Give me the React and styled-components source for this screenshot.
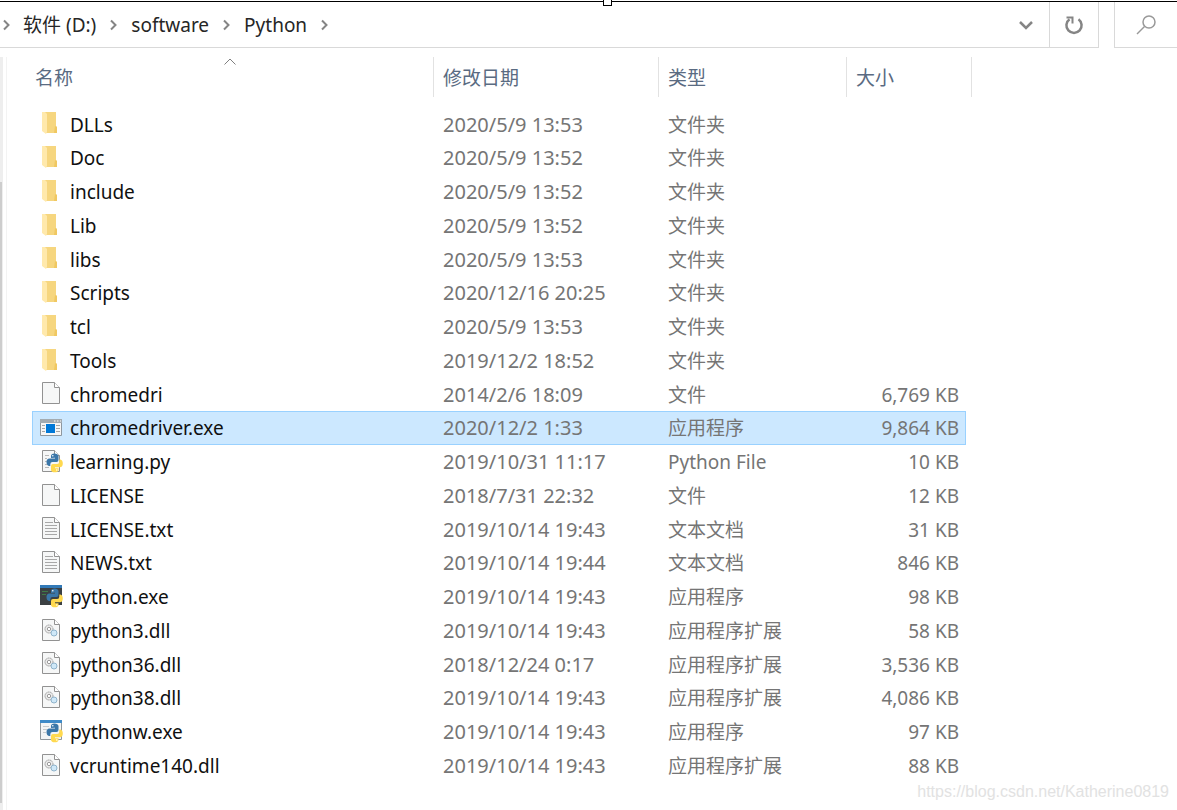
import React from "react";
import styled, { createGlobalStyle, css } from "styled-components";

const GlobalStyle = createGlobalStyle`
  * {
    box-sizing: border-box;
  }
  body {
    margin: 0;
    background: #ffffff;
    font-family: "Noto Sans", "Noto Sans CJK SC", sans-serif;
    font-size: 19px;
    color: #262626;
  }
  button {
    border: 0;
    padding: 0;
    background: none;
    font: inherit;
    color: inherit;
  }
`;

const Window = styled.div`
  position: relative;
  min-height: 100vh;
  display: flex;
  flex-direction: column;
`;

const TopEdge = styled.div`
  height: 2px;
  border-bottom: 1px solid #000000;
`;

const ResizeHandle = styled.span`
  position: absolute;
  top: 0;
  left: calc(50% + 14px);
  width: 9px;
  height: 6px;
  border: 1px solid #000000;
  border-top: 0;
  background: #ffffff;
`;

const Toolbar = styled.header`
  display: flex;
  height: 46px;
`;

const AddressBar = styled.nav`
  flex: 1;
  display: flex;
  align-items: center;
  border-bottom: 1px solid #d9d9d9;
`;

const Crumb = styled.button`
  line-height: 28px;
  white-space: nowrap;
`;

const CrumbArrow = styled.svg`
  width: 9px;
  height: 12px;
  margin: 0 ${({ $first }) => ($first ? "12px 0 2px" : "13px")};
  fill: none;
  stroke: #858585;
  stroke-width: 2;
`;

const ToolButton = styled.button`
  display: flex;
  align-items: center;
  justify-content: center;
  width: ${({ $width }) => $width};
  height: 46px;
  border: solid #d9d9d9;
  border-width: ${({ $edges }) => $edges};
`;

const HistoryButton = styled.button`
  display: flex;
  margin-left: auto;
  margin-right: 15px;
`;

const SearchButton = styled(ToolButton)`
  margin-left: 15px;
`;

const Body = styled.main`
  flex: 1;
  display: flex;
  padding-top: 9px;
`;

const ScrollTrack = styled.div`
  width: 7px;
  border-right: 1px solid #f3f3f3;
  background: linear-gradient(to right, #eeeeee 3px, #ffffff 3px);
`;

const ScrollThumb = styled.div`
  width: 2px;
  height: calc(100% - 132px);
  margin-top: 125px;
  background: #cdcdcd;
`;

const FileTable = styled.table`
  margin-left: 25px;
  table-layout: fixed;
  width: 940px;
  border-spacing: 0;
  align-self: flex-start;
`;

const HeadCell = styled.th`
  position: relative;
  height: 40px;
  padding: 0 0 0 ${({ $indent }) => $indent || "9px"};
  border-right: 1px solid #e2e2e2;
  text-align: left;
  font-weight: 400;
  color: #5a6b82;
`;

const SortMark = styled.svg`
  position: absolute;
  top: 0;
  left: 191px;
  width: 14px;
  height: 9px;
  fill: none;
  stroke: #7f7f7f;
`;

const Spacer = styled.tr`
  height: 11px;
`;

const Row = styled.tr`
  height: 34px;
  &:nth-child(4n + 1) {
    height: 33px;
  }
  ${({ $selected }) =>
    $selected &&
    css`
      td {
        background: #cce8ff;
        border-color: #99d1ff;
      }
    `}
`;

const Cell = styled.td`
  padding: 0 0 0 9px;
  border: 0 solid transparent;
  border-width: 1px 0;
  line-height: 28px;
  font-size: ${({ $size }) => $size || "19px"};
  color: #757575;
  white-space: nowrap;
`;

const NameCell = styled(Cell)`
  padding-left: 6px;
  border-left-width: 1px;
  color: #101010;
`;

const SizeCell = styled(Cell)`
  padding: 0 6px 0 0;
  border-right-width: 1px;
  text-align: right;
`;

const FileName = styled.div`
  display: flex;
  align-items: center;
  gap: 7px;
`;

const FileIcon = styled.svg`
  flex: none;
  width: 24px;
  height: 24px;
  margin-bottom: 3px;
`;

const Watermark = styled.span`
  position: absolute;
  right: 8px;
  bottom: 9px;
  font: 16px/18px "Liberation Sans", sans-serif;
  color: #e2e2e2;
`;

const Sheet = ({ children }) => (
  <>
    <path d="M3.5 1.5h12l5 5v16h-17z" fill="#f6f7f7" stroke="#929292" />
    <path d="M15.5 1.5v5h5" fill="#ffffff" stroke="#929292" />
    {children}
  </>
);

const PythonMark = () => (
  <>
    <path
      d="M12 9v-2q0-2.500 3.500-2.500t4 2.500v4q0 2-2 2h-4q-2.200 0-2.200 2.300v1.700h-1.300q-2.500-.5-2.500-4t3-3.500h5.500v-.8z"
      fill="#3a76a8"
    />
    <path
      d="M20.300 10.500h1q2.500.5 2.500 4t-3 3.800h-4.800v.9h3.500v1.800q-.3 2.300-3.700 2.300t-3.800-2.300v-4q0-2 2-2h4.100q2.200 0 2.200-2.300z"
      fill="#ffd94f"
    />
    <circle cx="13.800" cy="6.800" r=".8" fill="#ffffff" />
    <circle cx="17.800" cy="21" r=".8" fill="#ffffff" />
  </>
);

const icons = {
  folder: (
    <>
      <path d="M6 1h11v14l1 1v6h-12z" fill="#f6d67f" />
      <path d="M16 15l2 1v6h-3z" fill="#f0c862" />
      <path d="M3 1h3l2 2v18l-1 2-4-3z" fill="#ffe9ac" />
    </>
  ),
  file: <Sheet />,
  text: (
    <Sheet>
      <path
        d="M6 6.500h8M6 9.500h12M6 12.500h12M6 15.500h12M6 18.500h12"
        stroke="#a8a8a8"
      />
    </Sheet>
  ),
  python: (
    <Sheet>
      <path
        d="M6 6.500h4M6 9.500h2M6 12.500h2M6 15.500h2M6 18.500h4"
        stroke="#b8b8b8"
      />
      <PythonMark />
    </Sheet>
  ),
  dll: (
    <Sheet>
      <circle
        cx="10"
        cy="11"
        r="4"
        fill="#ececec"
        stroke="#9a9a9a"
        strokeDasharray="1.500 .6"
      />
      <circle cx="10" cy="11" r="1.700" fill="#ffffff" stroke="#9a9a9a" />
      <circle cx="15" cy="15" r="3" fill="#cfe8f8" stroke="#8fb3cb" />
    </Sheet>
  ),
  app: (
    <>
      <path d="M1.500 4.500h21v16h-21z" fill="#f6f6f6" stroke="#8e979e" />
      <path d="M1 4h22v4h-22z" fill="#a3abb1" />
      <path d="M15 6h1.500M18 6h1.500M21 6h1" stroke="#ffffff" />
      <path
        d="M3 10.500h3M3 13.500h3M3 16.500h3M17 10.500h4M17 13.500h4M17 16.500h4"
        stroke="#a6a6a6"
      />
      <path d="M7 9h9v9h-9z" fill="#0078d7" />
    </>
  ),
  console: (
    <>
      <path d="M1 2h22v19h-22z" fill="#3b4043" />
      <path d="M1 1h22v3h-22z" fill="#3279b7" />
      <path d="M3 7.500h6M3 10.500h4" stroke="#3f7a48" />
      <PythonMark />
    </>
  ),
  windowed: (
    <>
      <path d="M1.500 2.500h21v18h-21z" fill="#f3f5f6" stroke="#8f979d" />
      <path d="M1 1h22v3h-22z" fill="#3e8ac8" />
      <path d="M4 7.500h6M4 10.500h4M4 13.500h3" stroke="#c6cacd" />
      <PythonMark />
    </>
  ),
};

const files = [
  ["folder", "DLLs", "2020/5/9 13:53", "文件夹"],
  ["folder", "Doc", "2020/5/9 13:52", "文件夹"],
  ["folder", "include", "2020/5/9 13:52", "文件夹"],
  ["folder", "Lib", "2020/5/9 13:52", "文件夹"],
  ["folder", "libs", "2020/5/9 13:53", "文件夹"],
  ["folder", "Scripts", "2020/12/16 20:25", "文件夹"],
  ["folder", "tcl", "2020/5/9 13:53", "文件夹"],
  ["folder", "Tools", "2019/12/2 18:52", "文件夹"],
  ["file", "chromedri", "2014/2/6 18:09", "文件", "6,769 KB"],
  ["app", "chromedriver.exe", "2020/12/2 1:33", "应用程序", "9,864 KB"],
  ["python", "learning.py", "2019/10/31 11:17", "Python File", "10 KB"],
  ["file", "LICENSE", "2018/7/31 22:32", "文件", "12 KB"],
  ["text", "LICENSE.txt", "2019/10/14 19:43", "文本文档", "31 KB"],
  ["text", "NEWS.txt", "2019/10/14 19:44", "文本文档", "846 KB"],
  ["console", "python.exe", "2019/10/14 19:43", "应用程序", "98 KB"],
  ["dll", "python3.dll", "2019/10/14 19:43", "应用程序扩展", "58 KB"],
  ["dll", "python36.dll", "2018/12/24 0:17", "应用程序扩展", "3,536 KB"],
  ["dll", "python38.dll", "2019/10/14 19:43", "应用程序扩展", "4,086 KB"],
  ["windowed", "pythonw.exe", "2019/10/14 19:43", "应用程序", "97 KB"],
  ["dll", "vcruntime140.dll", "2019/10/14 19:43", "应用程序扩展", "88 KB"],
];

const Arrow = ({ first }) => (
  <CrumbArrow $first={first} viewBox="0 0 9 12">
    <path d="M2 1.500l4.500 4.500-4.500 4.500" />
  </CrumbArrow>
);

const App = () => {
  return (
    <Window>
      <GlobalStyle />
      <TopEdge />
      <ResizeHandle />
      <Toolbar>
        <AddressBar>
          <Arrow first />
          <Crumb>软件 (D:)</Crumb>
          <Arrow />
          <Crumb>software</Crumb>
          <Arrow />
          <Crumb>Python</Crumb>
          <Arrow />
          <HistoryButton aria-label="Recent locations">
            <svg width="16" height="10" viewBox="0 0 16 10">
              <path
                d="M2 2l6 6 6-6"
                fill="none"
                stroke="#858585"
                strokeWidth="2.500"
              />
            </svg>
          </HistoryButton>
        </AddressBar>
        <ToolButton $width="50px" $edges="0 1px 1px" aria-label="Refresh">
          <svg width="20" height="20" viewBox="0 0 20 20">
            <path
              d="M14.500 4.200a7.600 7.600 0 1 1-9 0"
              fill="none"
              stroke="#858585"
              strokeWidth="2.500"
            />
            <path
              d="M2.500 2.500h6v6"
              fill="none"
              stroke="#858585"
              strokeWidth="2"
            />
          </svg>
        </ToolButton>
        <SearchButton $width="63px" $edges="0 0 1px 1px" aria-label="Search">
          <svg
            width="22"
            height="22"
            viewBox="0 0 22 22"
            fill="none"
            stroke="#999999"
          >
            <circle cx="14" cy="8" r="6" strokeWidth="1.500" />
            <path d="M9.500 12.500l-7.500 7.500" strokeWidth="1.500" />
          </svg>
        </SearchButton>
      </Toolbar>
      <Body>
        <ScrollTrack>
          <ScrollThumb />
        </ScrollTrack>
        <FileTable>
          <colgroup>
            <col width="402" />
            <col width="225" />
            <col width="188" />
            <col width="119" />
            <col width="6" />
          </colgroup>
          <thead>
            <tr>
              <HeadCell $indent="3px">
                <button>名称</button>
                <SortMark viewBox="0 0 14 9">
                  <path d="M1.500 7.500l5.500-5.500 5.500 5.500" />
                </SortMark>
              </HeadCell>
              <HeadCell>
                <button>修改日期</button>
              </HeadCell>
              <HeadCell>
                <button>类型</button>
              </HeadCell>
              <HeadCell colSpan={2}>
                <button>大小</button>
              </HeadCell>
            </tr>
            <Spacer />
          </thead>
          <tbody>
            {files.map(([icon, name, date, type, size]) => (
              <Row key={name} $selected={name === "chromedriver.exe"}>
                <NameCell>
                  <FileName>
                    <FileIcon viewBox="0 0 24 24">{icons[icon]}</FileIcon>
                    {name}
                  </FileName>
                </NameCell>
                <Cell $size="20px">{date}</Cell>
                <Cell>{type}</Cell>
                <SizeCell>{size}</SizeCell>
              </Row>
            ))}
          </tbody>
        </FileTable>
      </Body>
      <Watermark>https://blog.csdn.net/Katherine0819</Watermark>
    </Window>
  );
};

export default App;
